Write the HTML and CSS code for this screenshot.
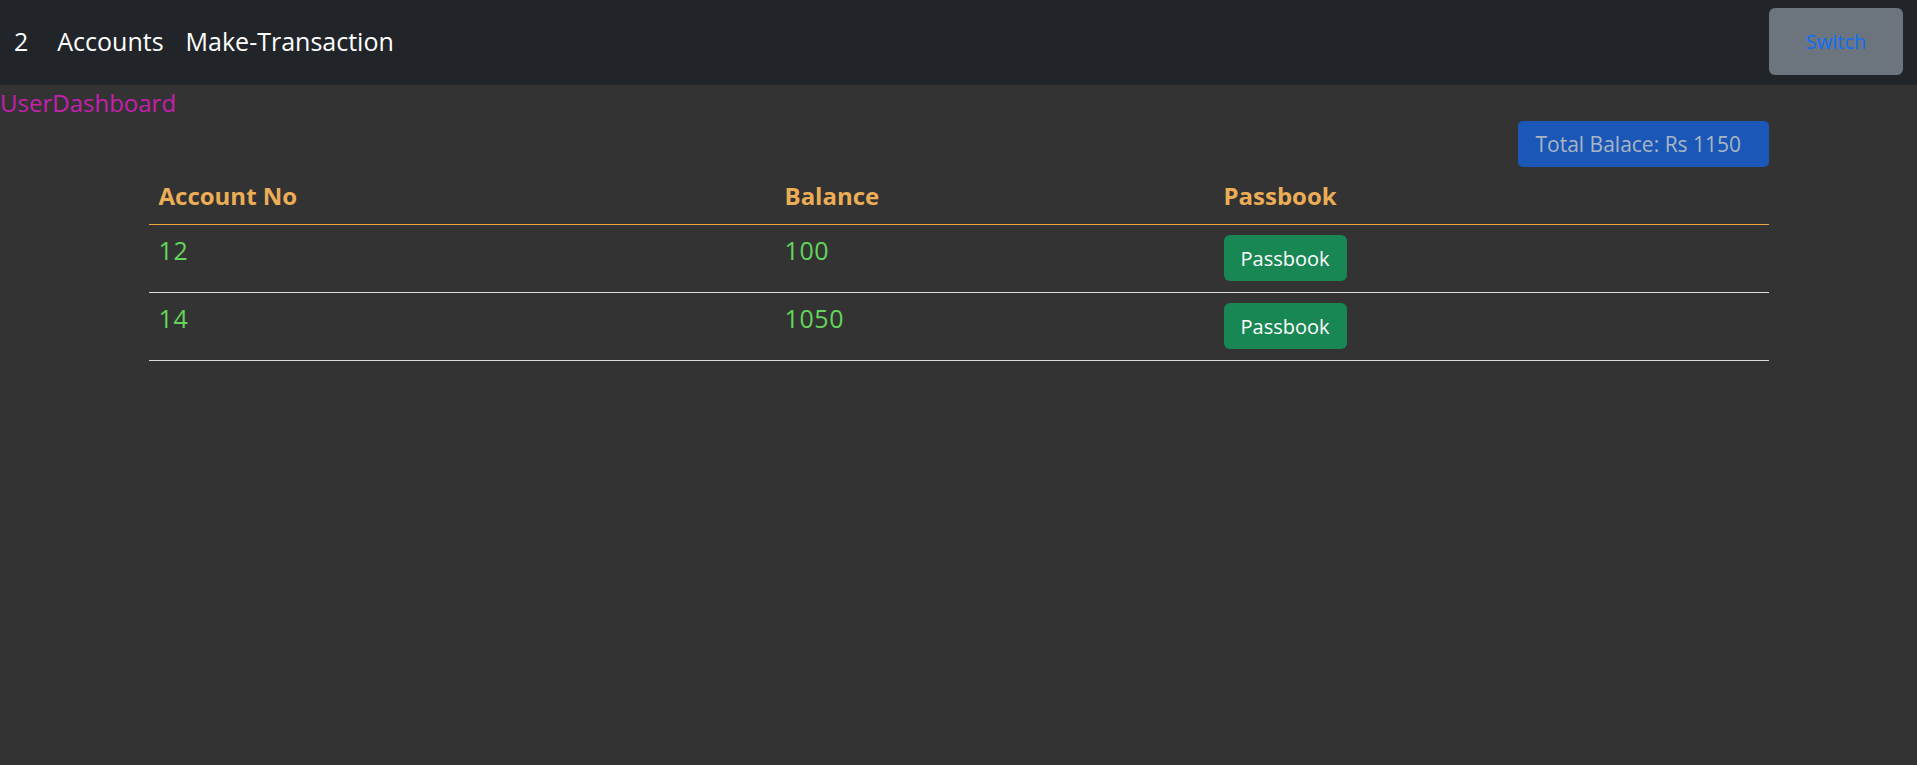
FILE: index.html
```html
<!DOCTYPE html>
<html lang="en">
<head>
<meta charset="utf-8">
<title>UserDashboard</title>
<link rel="stylesheet" href="styles.css">
</head>
<body>
<nav class="navbar">
  <span class="brand">2</span>
  <a class="nav-link" href="#">Accounts</a>
  <a class="nav-link" href="#">Make-Transaction</a>
  <button class="btn-switch" type="button">Switch</button>
</nav>
<div class="page-title">UserDashboard</div>
<main class="content">
  <div class="total-row">
    <span class="total-badge">Total Balace: Rs 1150</span>
  </div>
  <table class="accounts">
    <thead>
      <tr>
        <th class="col-acc">Account No</th>
        <th class="col-bal">Balance</th>
        <th>Passbook</th>
      </tr>
    </thead>
    <tbody>
      <tr>
        <td>12</td>
        <td>100</td>
        <td><button class="btn-passbook" type="button">Passbook</button></td>
      </tr>
      <tr>
        <td>14</td>
        <td>1050</td>
        <td><button class="btn-passbook" type="button">Passbook</button></td>
      </tr>
    </tbody>
  </table>
</main>
</body>
</html>
```

FILE: styles.css
```css
* { box-sizing: border-box; }

html, body {
  margin: 0;
  padding: 0;
}

body {
  background: #333333;
  font-family: "Open Sans", "Noto Sans", sans-serif;
  font-size: 24px;
  line-height: 1.5;
  color: #ffffff;
  min-height: 765px;
}

.navbar {
  display: flex;
  align-items: center;
  height: 85px;
  padding: 0 14px 2px;
  background: #212529;
}

.brand {
  color: #ffffff;
  font-size: 25px;
  margin-right: 18px;
}

.nav-link {
  color: #ffffff;
  text-decoration: none;
  font-size: 25px;
  padding: 0 11px;
}

.btn-switch {
  margin-left: auto;
  width: 134px;
  height: 67px;
  background: #6c757d;
  color: #0d6efd;
  border: none;
  border-radius: 6px;
  font-family: "Open Sans", "Noto Sans", sans-serif;
  font-size: 20px;
}

.page-title {
  color: #c61fae;
  font-size: 24px;
  height: 36px;
  line-height: 36px;
}

.content {
  width: 1620px;
  margin: 0 auto;
}

.total-row {
  display: flex;
  justify-content: flex-end;
}

.total-badge {
  display: inline-block;
  width: 251px;
  height: 46px;
  line-height: 46px;
  padding: 0 0 0 18px;
  background: #1b57b6;
  color: #a9b5c4;
  border-radius: 5px;
  font-size: 21px;
}

.accounts {
  width: 100%;
  border-collapse: collapse;
  margin-top: 1px;
}

.accounts th,
.accounts td {
  text-align: left;
  vertical-align: top;
  padding: 10px 10px;
}

.accounts th {
  color: #ecad57;
  font-weight: 700;
  font-size: 24px;
  line-height: 36px;
  border-bottom: 1px solid #eaa83f;
}

.accounts td {
  color: #62d65a;
  font-size: 25px;
  line-height: 30px;
  letter-spacing: 0.6px;
  height: 68px;
  border-bottom: 1px solid #dcdcdc;
}

.col-acc { width: 626px; }
.col-bal { width: 439px; }

.btn-passbook {
  display: block;
  width: 123px;
  height: 46px;
  background: #198754;
  color: #ffffff;
  border: none;
  border-radius: 6px;
  font-family: "Open Sans", "Noto Sans", sans-serif;
  font-size: 20px;
  letter-spacing: 0;
  padding: 0;
}
```
